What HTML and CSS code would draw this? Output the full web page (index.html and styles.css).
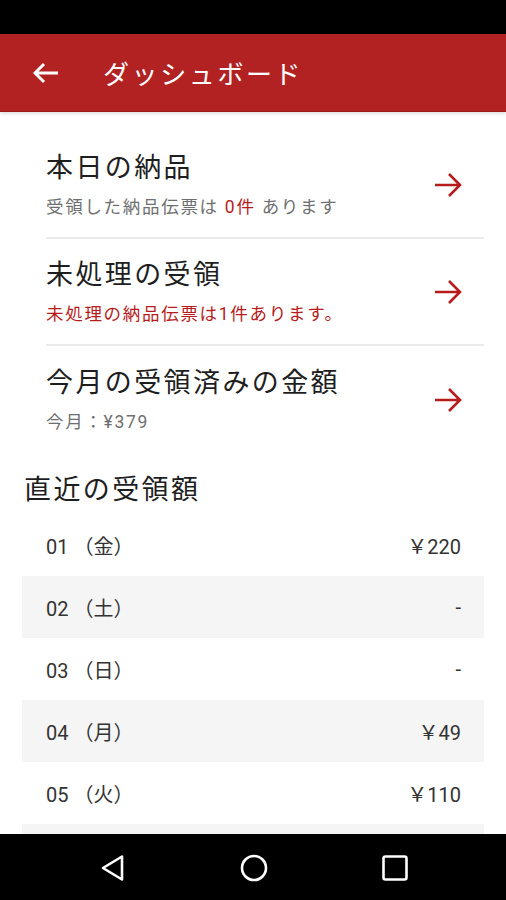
FILE: index.html
```html
<!DOCTYPE html>
<html lang="ja">
<head>
  <meta charset="UTF-8">
  <meta name="viewport" content="width=device-width, initial-scale=1.0">
  <title>ダッシュボード</title>
  <link rel="stylesheet" href="styles.css">
</head>
<body>
  <div class="status-bar"></div>
  <header class="toolbar">
    <svg class="back-icon" width="26" height="22" viewBox="0 0 26 22">
      <path d="M2 11H25M11 2L2 11L11 20" fill="none" stroke="#fff" stroke-width="3" stroke-linejoin="miter"/>
    </svg>
    <h1>ダッシュボード</h1>
  </header>
  <main class="content">
    <ul class="menu">
      <li class="menu-item">
        <div class="menu-text">
          <div class="menu-title">本日の納品</div>
          <div class="menu-sub">受領した納品伝票は <span class="red">0件</span> あります</div>
        </div>
        <svg class="go-icon" width="28" height="26" viewBox="0 0 28 26">
          <path d="M1 13H26M15 2L26 13L15 24" fill="none" stroke="#b71c1c" stroke-width="2.6"/>
        </svg>
      </li>
      <li class="menu-item">
        <div class="menu-text">
          <div class="menu-title">未処理の受領</div>
          <div class="menu-sub red">未処理の納品伝票は1件あります。</div>
        </div>
        <svg class="go-icon" width="28" height="26" viewBox="0 0 28 26">
          <path d="M1 13H26M15 2L26 13L15 24" fill="none" stroke="#b71c1c" stroke-width="2.6"/>
        </svg>
      </li>
      <li class="menu-item">
        <div class="menu-text">
          <div class="menu-title">今月の受領済みの金額</div>
          <div class="menu-sub">今月：¥379</div>
        </div>
        <svg class="go-icon" width="28" height="26" viewBox="0 0 28 26">
          <path d="M1 13H26M15 2L26 13L15 24" fill="none" stroke="#b71c1c" stroke-width="2.6"/>
        </svg>
      </li>
    </ul>

    <h2 class="section-title">直近の受領額</h2>
    <div class="daily-list">
      <div class="day-row"><span>01 （金）</span><span>￥220</span></div>
      <div class="day-row"><span>02 （土）</span><span>-</span></div>
      <div class="day-row"><span>03 （日）</span><span>-</span></div>
      <div class="day-row"><span>04 （月）</span><span>￥49</span></div>
      <div class="day-row"><span>05 （火）</span><span>￥110</span></div>
      <!-- 次の行は画面外で切れている -->
      <div class="day-row"></div>
    </div>
  </main>
  <nav class="nav-bar">
    <svg width="30" height="30" viewBox="0 0 30 30">
      <path d="M24 3.5V26.5L5 15Z" fill="none" stroke="#fff" stroke-width="2.6" stroke-linejoin="round"/>
    </svg>
    <svg width="30" height="30" viewBox="0 0 30 30">
      <circle cx="15" cy="15" r="12" fill="none" stroke="#fff" stroke-width="2.6"/>
    </svg>
    <svg width="30" height="30" viewBox="0 0 30 30">
      <rect x="3.5" y="3.5" width="23" height="23" rx="2" fill="none" stroke="#fff" stroke-width="2.6"/>
    </svg>
  </nav>
</body>
</html>
```

FILE: styles.css
```css
body {
  margin: 0;
  padding: 0;
  width: 506px;
  height: 900px;
  overflow: hidden;
  background-color: #fff;
  font-family: Roboto, "Noto Sans CJK JP", sans-serif;
  color: #222;
}

.status-bar {
  height: 34px;
  background-color: #000;
}

.toolbar {
  height: 77px;
  background-color: #b22222;
  border-bottom: 1px solid #a01818;
  box-shadow: 0 2px 3px rgba(0, 0, 0, 0.12);
  display: flex;
  align-items: center;
  padding-left: 33px;
}

.back-icon {
  margin-right: 44px;
}

.toolbar h1 {
  margin: 0;
  color: #fff;
  font-size: 26px;
  font-weight: normal;
  letter-spacing: 2.6px;
}

.content {
  height: 722px;
  overflow: hidden;
}

.menu {
  list-style: none;
  margin: 0;
  padding: 20px 22px 0 46px;
}

.menu-item {
  height: 107px;
  box-sizing: border-box;
  display: flex;
  align-items: center;
  justify-content: space-between;
  padding-right: 22px;
  border-bottom: 2px solid #ebebeb;
}

.menu-item:last-child {
  border-bottom: none;
}

.menu-title {
  font-size: 27px;
  line-height: 44px;
  letter-spacing: 2.4px;
  color: #1e1e1e;
}

.menu-sub {
  font-size: 17.5px;
  line-height: 34px;
  letter-spacing: 1.7px;
  color: #6f6f6f;
}

.red {
  color: #b71c1c;
}

.section-title {
  margin: 0;
  padding: 17px 0 0 24px;
  font-size: 27px;
  line-height: 40px;
  font-weight: normal;
  letter-spacing: 2.4px;
  color: #1e1e1e;
}

.daily-list {
  margin: 4px 22px 0;
}

.day-row {
  height: 62px;
  display: flex;
  align-items: center;
  justify-content: space-between;
  padding: 0 23px 0 24px;
  font-size: 20px;
  color: #333;
}

.day-row:nth-child(even) {
  background-color: #f5f5f5;
}

.nav-bar {
  height: 67px;
  background-color: #000;
  display: flex;
  align-items: center;
  gap: 111px;
  padding-left: 98px;
}
```
